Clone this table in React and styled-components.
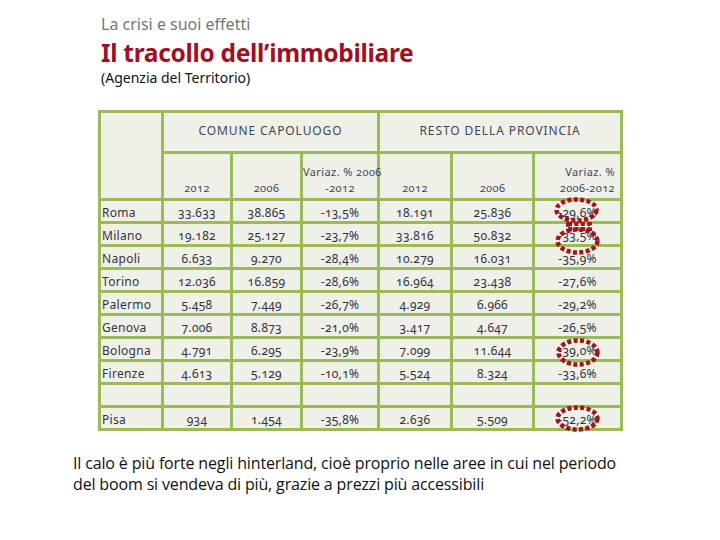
import styled, { createGlobalStyle } from "styled-components";

const GlobalStyle = createGlobalStyle`
  html, body {
    margin: 0;
    padding: 0;
    background: #ffffff;
  }
  body {
    font-family: "Open Sans", "Noto Sans", sans-serif;
  }
`;

const Page = styled.div`
  width: 720px;
  height: 540px;
  padding-top: 14px;
  box-sizing: border-box;
  overflow: hidden;
`;

const Heading = styled.div`
  padding-left: 101px;
`;

const Kicker = styled.div`
  font-size: 16px;
  line-height: 20px;
  color: #767676;
  font-family: "Noto Sans", sans-serif;
`;

const Title = styled.h1`
  margin: 4px 0 0;
  font-size: 24.5px;
  line-height: 30px;
  font-weight: 700;
  color: #a30f1e;
  font-family: "Noto Sans", sans-serif;
  letter-spacing: -0.3px;
`;

const Source = styled.div`
  margin-top: 1px;
  font-size: 14px;
  line-height: 18px;
  color: #111;
  font-family: "Noto Sans", sans-serif;
`;

const Table = styled.table`
  margin: 23px 0 0 98px;
  width: 523px;
  table-layout: fixed;
  border-collapse: collapse;
  background: #eff1e8;
  font-family: "Noto Sans", sans-serif;
  font-variant-numeric: oldstyle-nums;
  font-size: 12px;
  letter-spacing: 0.3px;
  color: #333344;
  border: 3px solid #9bbb59;
`;

const Cell = styled.td`
  position: relative;
  border: 3px solid #9bbb59;
  padding: 0 1px;
  height: 20px;
  line-height: 16px;
  vertical-align: bottom;
  text-align: ${(p) => p.$align || "center"};
  white-space: nowrap;
`;

const Group = styled.th`
  border: 3px solid #9bbb59;
  height: 34px;
  font-weight: 400;
  font-size: 12px;
  color: #44445a;
  padding: 0 0 4px;
  letter-spacing: 0.9px;
`;

const Sub = styled.th`
  border: 3px solid #9bbb59;
  height: 42px;
  font-weight: 400;
  font-size: 11px;
  color: #44445a;
  vertical-align: bottom;
  text-align: ${(p) => p.$align || "center"};
  padding: 0 ${(p) => p.$pr || 0}px 2px 0;
  line-height: 16px;
  letter-spacing: 0.4px;
  white-space: nowrap;
`;

const Overlay = styled.svg`
  position: absolute;
  left: 50%;
  top: 50%;
  margin-left: ${(p) => -p.width / 2 + (p.$dx || 0)}px;
  margin-top: ${(p) => -p.height / 2 + (p.$dy || 0)}px;
  overflow: visible;
  pointer-events: none;
  z-index: 2;
`;

const Ring = ({ w, h, dx, dy }) => (
  <Overlay width={w} height={h} $dx={dx} $dy={dy}>
    <ellipse
      cx={w / 2}
      cy={h / 2}
      rx={w / 2 - 2.5}
      ry={h / 2 - 2.5}
      fill="none"
      stroke="#a0151f"
      strokeWidth="4.5"
      strokeDasharray="4 2.4"
    />
  </Overlay>
);

const Bridge = ({ dy }) => (
  <Overlay width={26} height={9} $dx={1} $dy={dy}>
    <rect
      x="2"
      y="2"
      width="22"
      height="5"
      fill="none"
      stroke="#a0151f"
      strokeWidth="4"
      strokeDasharray="4 2.4"
    />
  </Overlay>
);

const Note = styled.p`
  margin: 22px 0 0 73px;
  font-size: 16px;
  line-height: 21px;
  color: #111;
  font-family: "Open Sans", sans-serif;
  letter-spacing: -0.15px;
`;

const rows = [
  ["Roma", "33.633", "38.865", "-13,5%", "18.191", "25.836", "-29,6%", { w: 45, h: 26, dx: -1, dy: -1 }],
  ["Milano", "19.182", "25.127", "-23,7%", "33.816", "50.832", "-33,5%", { w: 45, h: 28, dx: 0, dy: 7, bridge: -8 }],
  ["Napoli", "6.633", "9.270", "-28,4%", "10.279", "16.031", "-35,9%"],
  ["Torino", "12.036", "16.859", "-28,6%", "16.964", "23.438", "-27,6%"],
  ["Palermo", "5.458", "7.449", "-26,7%", "4.929", "6.966", "-29,2%"],
  ["Genova", "7.006", "8.873", "-21,0%", "3.417", "4.647", "-26,5%"],
  ["Bologna", "4.791", "6.295", "-23,9%", "7.099", "11.644", "-39,0%", { w: 44, h: 29, dx: 0, dy: 3 }],
  ["Firenze", "4.613", "5.129", "-10,1%", "5.524", "8.324", "-33,6%"],
  null,
  ["Pisa", "934", "1.454", "-35,8%", "2.636", "5.509", "-52,2%", { w: 45, h: 27, dx: 0, dy: 0 }],
];

const widths = [63, 69, 70, 77, 73, 82, 88];

function DataRow({ r }) {
  if (!r) {
    return (
      <tr>
        {widths.map((w, i) => (
          <Cell key={i} />
        ))}
      </tr>
    );
  }
  const ring = r[7];
  return (
    <tr>
      <Cell $align="left">{r[0]}</Cell>
      <Cell>{r[1]}</Cell>
      <Cell>{r[2]}</Cell>
      <Cell>{r[3]}</Cell>
      <Cell>{r[4]}</Cell>
      <Cell>{r[5]}</Cell>
      <Cell>
        {r[6]}
        {ring && <Ring w={ring.w} h={ring.h} dx={ring.dx} dy={ring.dy} />}
        {ring && ring.bridge && <Bridge dy={ring.bridge} />}
      </Cell>
    </tr>
  );
}

export default function App() {
  return (
    <Page>
      <GlobalStyle />
      <Heading>
        <Kicker>La crisi e suoi effetti</Kicker>
        <Title>Il tracollo dell’immobiliare</Title>
        <Source>(Agenzia del Territorio)</Source>
      </Heading>
      <Table>
        <colgroup>
          {widths.map((w, i) => (
            <col key={i} style={{ width: w }} />
          ))}
        </colgroup>
        <thead>
          <tr>
            <Group rowSpan={2} />
            <Group colSpan={3}>COMUNE CAPOLUOGO</Group>
            <Group colSpan={3}>RESTO DELLA PROVINCIA</Group>
          </tr>
          <tr>
            <Sub>2012</Sub>
            <Sub>2006</Sub>
            <Sub>
              Variaz. % 2006
              <br />
              -2012
            </Sub>
            <Sub>2012</Sub>
            <Sub>2006</Sub>
            <Sub $align="right" $pr={5}>
              Variaz. %
              <br />
              2006-2012
            </Sub>
          </tr>
        </thead>
        <tbody>
          {rows.map((r, i) => (
            <DataRow key={i} r={r} />
          ))}
        </tbody>
      </Table>
      <Note>
        Il calo è più forte negli hinterland, cioè proprio nelle aree in cui nel periodo
        <br />
        del boom si vendeva di più, grazie a prezzi più accessibili
      </Note>
    </Page>
  );
}
